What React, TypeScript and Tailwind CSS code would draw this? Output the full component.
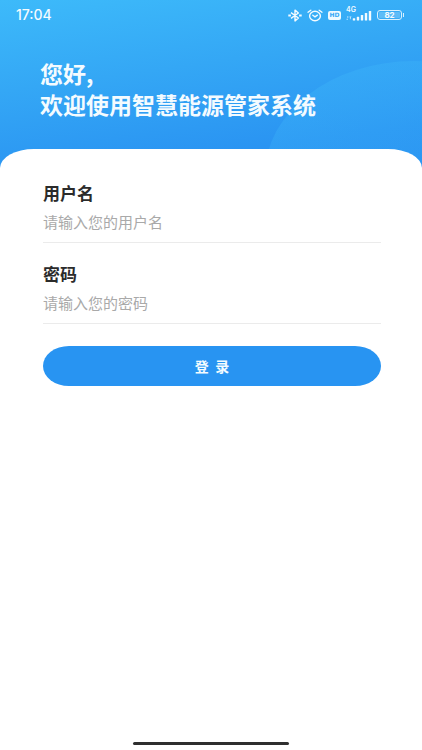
import { useState } from "react";

function BluetoothIcon() {
  return (
    <svg width="14" height="13" viewBox="0 0 14 13" fill="none" stroke="currentColor" strokeWidth="1.4">
      <path d="M3 3.6 10.4 9 7 11.9V1.1L10.4 4 3 9.4" strokeLinejoin="round" />
      <path d="M.3 6.5h2.6M11.1 6.5h2.6" strokeWidth="1.8" />
    </svg>
  );
}

function AlarmIcon() {
  return (
    <svg width="16" height="13" viewBox="0 0 16 13" fill="none" stroke="currentColor" strokeWidth="1.4" strokeLinecap="round">
      <ellipse cx="8" cy="7" rx="5.4" ry="4.7" />
      <path d="M5.8 6.2 8 7.8l2.4-1.6" />
      <path d="M1 3.2 3.8 1.2M15 3.2l-2.8-2" />
    </svg>
  );
}

function SignalIcon() {
  return (
    <svg width="26" height="11" viewBox="0 0 26 11" fill="currentColor">
      <path d="M1 6.6h1.4v1H1zM.6 8.8h1.2v1H.6zM3.4 6.4h2.2l-.9 1.2v1.6h-.8V7.6z" opacity=".85" />
      <rect x="6.8" y="8.2" width="2.4" height="2.3" rx=".6" />
      <rect x="10.8" y="6.8" width="2.4" height="3.7" rx=".6" />
      <rect x="14.8" y="5" width="2.4" height="5.5" rx=".6" />
      <rect x="18.8" y="3" width="2.4" height="7.5" rx=".6" />
      <rect x="22.8" y="1" width="2.4" height="9.5" rx=".6" />
    </svg>
  );
}

function StatusBar() {
  return (
    <div className="flex h-[30px] items-center justify-between pr-[18px] pl-4 font-['Inter',sans-serif]">
      <span className="text-[14px] leading-4 font-medium">17:04</span>
      <div className="flex items-center gap-[5px]">
        <BluetoothIcon />
        <AlarmIcon />
        <span className="flex h-[9px] w-[13px] items-center justify-center rounded-xs bg-[#eefaff] font-['DejaVu_Sans',sans-serif] text-[6px] leading-none font-bold text-[#36a8f6]">
          HD
        </span>
        <div className="relative">
          <SignalIcon />
          <span className="absolute -top-1 left-0 text-[7px] leading-none font-semibold">4G</span>
        </div>
        <div className="flex items-center">
          <span className="flex h-[10px] w-[25px] items-center justify-center rounded-[3px] border border-[#d6f0ff] p-px">
            <span className="flex h-full w-full items-center justify-center rounded-[1px] bg-white/20 text-[8px] leading-none font-bold">
              82
            </span>
          </span>
          <span className="ml-px h-1 w-px bg-[#d6f0ff]" />
        </div>
      </div>
    </div>
  );
}

export default function App() {
  const [username, setUsername] = useState("");
  const [password, setPassword] = useState("");

  const handleSubmit = (e: React.FormEvent) => {
    e.preventDefault();
  };

  return (
    <div className="flex min-h-screen flex-col bg-white font-['Noto_Sans_CJK_SC',sans-serif]">
      <header className="relative overflow-hidden bg-[linear-gradient(172deg,#3dbafa_0%,#34a7f5_40%,#2a94f2_80%,#288ff0_100%)] pb-[50px] text-[#f4fbff]">
        <svg
          className="absolute top-[61px] right-0"
          width="157"
          height="114"
          viewBox="0 0 157 114"
        >
          <defs>
            <linearGradient id="bubble" x1="0.2" y1="0" x2="0.8" y2="0.9">
              <stop offset="0" stopColor="#3fb9fa" stopOpacity=".36" />
              <stop offset="1" stopColor="#3fb9fa" stopOpacity="0" />
            </linearGradient>
          </defs>
          <ellipse cx="149" cy="114" rx="149" ry="114" fill="url(#bubble)" />
        </svg>
        <StatusBar />
        <h1 className="relative px-10 pt-7 text-[23px] leading-[31px] font-bold">
          您好,
          <br />
          欢迎使用智慧能源管家系统
        </h1>
      </header>

      <main className="relative -mt-[21px] flex-1 rounded-t-[34px_19px] bg-white pt-8 pr-[41px] pl-[43px]">
        <form onSubmit={handleSubmit}>
          <div className="mb-[19px] border-b border-[#ebebeb] pb-2">
            <label htmlFor="username" className="block text-[17px] leading-6 font-bold text-[#2b2b2b]">
              用户名
            </label>
            <input
              id="username"
              type="text"
              placeholder="请输入您的用户名"
              value={username}
              onChange={(e) => setUsername(e.target.value)}
              className="mt-1 block h-[25px] w-full text-[15px] outline-none placeholder:text-[#a9a9a9]"
            />
          </div>

          <div className="mb-[22px] border-b border-[#ebebeb] pb-2">
            <label htmlFor="password" className="block text-[17px] leading-6 font-bold text-[#2b2b2b]">
              密码
            </label>
            <input
              id="password"
              type="password"
              placeholder="请输入您的密码"
              value={password}
              onChange={(e) => setPassword(e.target.value)}
              className="mt-1 block h-[25px] w-full text-[15px] outline-none placeholder:text-[#a9a9a9]"
            />
          </div>

          <button
            type="submit"
            className="h-10 w-full rounded-[26px/20px] bg-[#2894f2] text-[14px] font-bold text-[#f4fbff]"
          >
            登&nbsp; 录
          </button>
        </form>
      </main>

      <div className="mx-auto mb-[5px] h-[3px] w-[156px] rounded-full bg-[#2f2f2f]" />
    </div>
  );
}
